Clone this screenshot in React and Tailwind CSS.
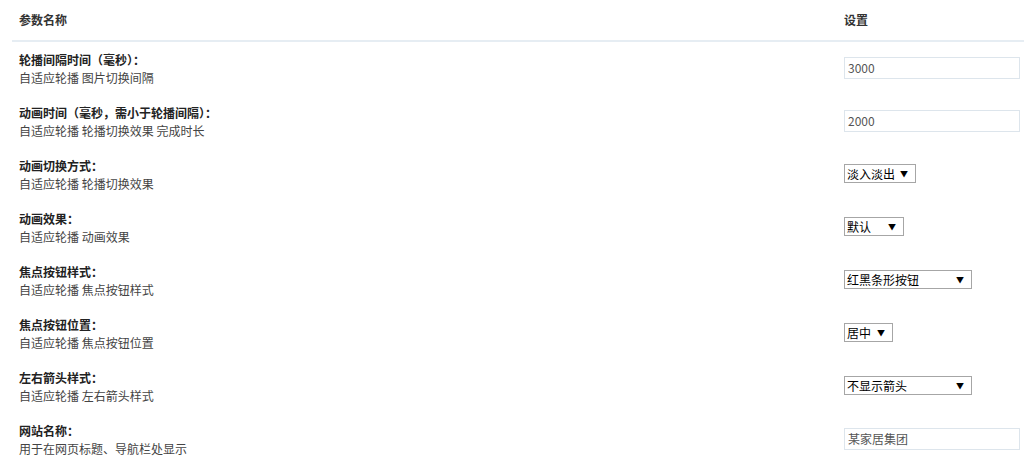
const rows = [
  { title: "轮播间隔时间（毫秒）：", desc: "自适应轮播 图片切换间隔", type: "input", value: "3000" },
  { title: "动画时间（毫秒，需小于轮播间隔）：", desc: "自适应轮播 轮播切换效果 完成时长", type: "input", value: "2000" },
  { title: "动画切换方式：", desc: "自适应轮播 轮播切换效果", type: "select", value: "淡入淡出", width: "w-[72px]" },
  { title: "动画效果：", desc: "自适应轮播 动画效果", type: "select", value: "默认", width: "w-[60px]" },
  { title: "焦点按钮样式：", desc: "自适应轮播 焦点按钮样式", type: "select", value: "红黑条形按钮", width: "w-[128px]" },
  { title: "焦点按钮位置：", desc: "自适应轮播 焦点按钮位置", type: "select", value: "居中", width: "w-[49px]" },
  { title: "左右箭头样式：", desc: "自适应轮播 左右箭头样式", type: "select", value: "不显示箭头", width: "w-[128px]" },
  { title: "网站名称：", desc: "用于在网页标题、导航栏处显示", type: "input", value: "某家居集团" },
];

function Control({ row }) {
  if (row.type === "input") {
    return (
      <input
        type="text"
        defaultValue={row.value}
        className="h-[22px] w-[176px] border border-[#dde5ec] bg-white px-[3px] text-[12px] text-[#555] outline-none"
      />
    );
  }
  return (
    <div
      className={`flex h-[19px] ${row.width} items-center justify-between border border-[#a6a6a6] bg-white pl-[2px] pr-[7px] text-[12px] leading-none text-black`}
    >
      <span>{row.value}</span>
      <span className="text-[8px]">▼</span>
    </div>
  );
}

export default function App() {
  return (
    <div className="h-[462px] w-[1024px] overflow-hidden bg-white pl-3 font-['Noto_Sans_CJK_SC',sans-serif] text-[12px] text-[#333]">
      <div className="grid h-[42px] grid-cols-[832px_1fr] items-center border-b-2 border-[#e6edf3] pb-[1px] font-bold">
        <div className="pl-[7px]">参数名称</div>
        <div>设置</div>
      </div>
      {rows.map((row) => (
        <div key={row.title} className="grid h-[53px] grid-cols-[832px_1fr] items-center">
          <div className="pl-[7px] leading-[18px]">
            <div className="font-bold text-[#222]">{row.title}</div>
            <div className="text-[#444]">{row.desc}</div>
          </div>
          <div className="-mt-[2px]">
            <Control row={row} />
          </div>
        </div>
      ))}
    </div>
  );
}
